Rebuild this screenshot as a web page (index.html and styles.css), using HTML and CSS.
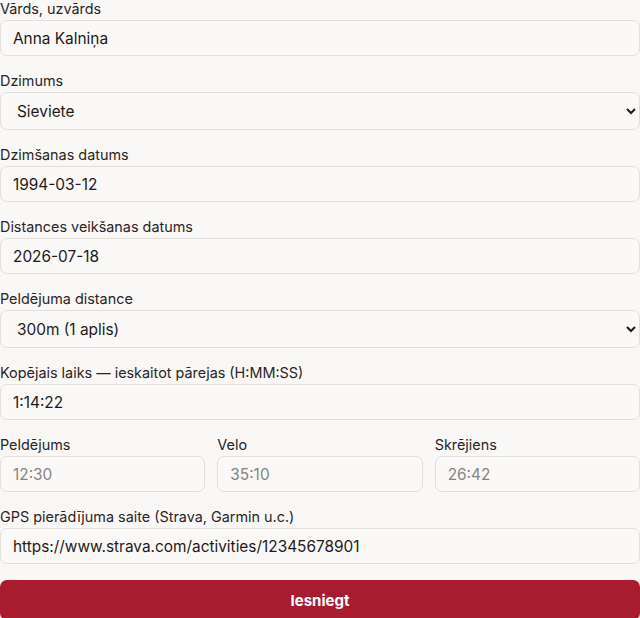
FILE: index.html
```html
<!DOCTYPE html>
<html lang="lv">
<head>
<meta charset="utf-8">
<title>Pieteikums</title>
<link rel="stylesheet" href="styles.css">
</head>
<body>
<form class="form">
  <div class="field">
    <label class="label">Vārds, uzvārds</label>
    <input class="input" type="text" value="Anna Kalniņa">
  </div>
  <div class="field">
    <label class="label">Dzimums</label>
    <select class="input select"><option>Sieviete</option><option>Vīrietis</option></select>
  </div>
  <div class="field">
    <label class="label">Dzimšanas datums</label>
    <input class="input" type="text" value="1994-03-12">
  </div>
  <div class="field">
    <label class="label">Distances veikšanas datums</label>
    <input class="input" type="text" value="2026-07-18">
  </div>
  <div class="field">
    <label class="label">Peldējuma distance</label>
    <select class="input select"><option>300m (1 aplis)</option><option>600m (2 apļi)</option></select>
  </div>
  <div class="field">
    <label class="label">Kopējais laiks — ieskaitot pārejas (H:MM:SS)</label>
    <input class="input" type="text" value="1:14:22">
  </div>
  <div class="split">
    <div class="field">
      <label class="label">Peldējums</label>
      <input class="input" type="text" placeholder="12:30">
    </div>
    <div class="field">
      <label class="label">Velo</label>
      <input class="input" type="text" placeholder="35:10">
    </div>
    <div class="field">
      <label class="label">Skrējiens</label>
      <input class="input" type="text" placeholder="26:42">
    </div>
  </div>
  <div class="field">
    <label class="label">GPS pierādījuma saite (Strava, Garmin u.c.)</label>
    <input class="input" type="text" value="https://www.strava.com/activities/12345678901">
  </div>
  <button class="submit" type="button">Iesniegt</button>
</form>
</body>
</html>
```
FILE: styles.css
```css
html, body {
  margin: 0;
  padding: 0;
  background: #f9f8f6;
}
body {
  font-family: Inter, "Noto Sans", sans-serif;
  color: #2b2525;
}
.form {
  display: flex;
  flex-direction: column;
  gap: 16px;
}
.field {
  display: flex;
  flex-direction: column;
  gap: 3px;
  min-width: 0;
}
.label {
  font-size: 14.4px;
  line-height: 17px;
  color: #2b2525;
}
.input {
  box-sizing: border-box;
  width: 100%;
  height: 36px;
  margin: 0;
  padding: 0 12px;
  font-family: inherit;
  font-size: 15.4px;
  color: #1f1a1a;
  background: #faf9f7;
  border: 1px solid #e3dfdb;
  border-radius: 7px;
  outline: none;
}
.input::placeholder {
  color: #888482;
}
.select {
  height: 38px;
  padding: 0 8px 0 12px;
}
.split {
  display: grid;
  grid-template-columns: 1fr 1fr 1fr;
  gap: 12px;
}
.submit {
  height: 40px;
  margin: 0;
  border: none;
  border-radius: 7px;
  background: #a91b2e;
  color: #ffffff;
  font-family: inherit;
  font-size: 15px;
  font-weight: 700;
}
```
